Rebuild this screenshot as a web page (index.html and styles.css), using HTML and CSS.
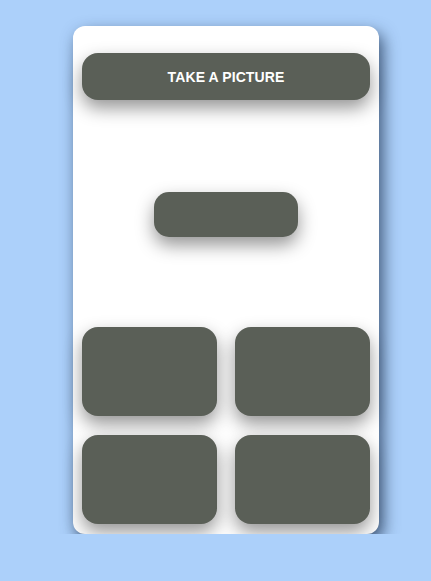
FILE: index.html
```html
<!DOCTYPE html>
<html>
<head>
    <meta charset="UTF-8">
    <meta name="viewport" content="width=device-width, initial-scale=1.0">
    <title>Camera</title>
    <link rel="stylesheet" href="styles.css">
</head>
<body>
    <div class="card">
        <button class="take-btn">TAKE A PICTURE</button>
        <div class="middle">
            <button class="small-btn"></button>
        </div>
        <div class="grid">
            <div class="tile"></div>
            <div class="tile"></div>
            <div class="tile"></div>
            <div class="tile"></div>
        </div>
    </div>
</body>
</html>
```

FILE: styles.css
```css
body {
    margin: 0;
    background-color: #acd0fa;
    font-family: "Liberation Sans", Arial, sans-serif;
}
.card {
    width: 288px;
    margin: 26px 0 0 73px;
    padding: 27px 9px 10px 9px;
    background-color: #ffffff;
    border-radius: 12px;
    box-shadow: 4px 7px 16px rgba(25, 45, 75, 0.75);
}
.take-btn {
    display: block;
    width: 288px;
    height: 47px;
    border: none;
    border-radius: 16px;
    background-color: #5a5f57;
    color: white;
    font-family: "Liberation Sans", Arial, sans-serif;
    font-weight: bold;
    font-size: 14px;
    letter-spacing: 0.1px;
    box-shadow: 0 8px 18px rgba(0, 0, 0, 0.42);
}
.middle {
    display: flex;
    justify-content: center;
    padding: 92px 0 90px 0;
}
.small-btn {
    width: 144px;
    height: 45px;
    border: none;
    border-radius: 15px;
    background-color: #5a5f57;
    box-shadow: 0 8px 18px rgba(0, 0, 0, 0.42);
}
.grid {
    display: grid;
    grid-template-columns: 135px 135px;
    grid-auto-rows: 89px;
    column-gap: 18px;
    row-gap: 19px;
}
.tile {
    background-color: #5a5f57;
    border-radius: 16px;
    box-shadow: 0 8px 18px rgba(0, 0, 0, 0.42);
}
```
